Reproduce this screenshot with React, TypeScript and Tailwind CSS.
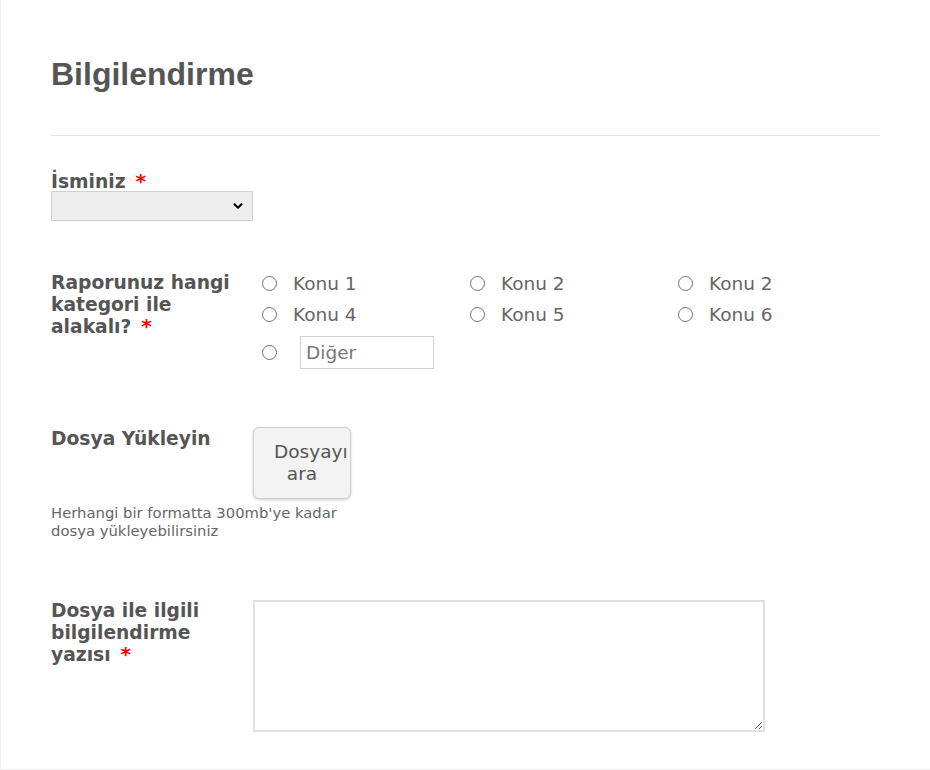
import { ChevronDown } from "lucide-react";

const dejavu = "font-['DejaVu_Sans',Verdana,sans-serif]";

function Label({ children, required }: { children: React.ReactNode; required?: boolean }) {
  return (
    <div className={`${dejavu} text-[18.7px] font-bold leading-[22px] text-[#555]`}>
      {children}
      {required && <span className="ml-[3px] text-[20px] leading-none text-[#f00]"> *</span>}
    </div>
  );
}

function Circle() {
  return <span className="h-[15px] w-[15px] shrink-0 rounded-full border-[1.5px] border-[#707070]" />;
}

function Radio({ label }: { label: string }) {
  return (
    <div className="flex h-[31px] items-center pl-[9px]">
      <Circle />
      <span className="ml-[16px] text-[18.5px] text-[#666]">{label}</span>
    </div>
  );
}

export default function App() {
  const options = ["Konu 1", "Konu 2", "Konu 2", "Konu 4", "Konu 5", "Konu 6"];
  return (
    <div className="h-[770px] w-[930px] border-b border-l border-[#f0f0f0] bg-white pl-[50px] pr-[50px]">
      <h1 className="pt-[55px] font-['Liberation_Sans',Arial,sans-serif] text-[32px] font-bold leading-[38px] text-[#555]">
        Bilgilendirme
      </h1>
      <div className="mt-[42px] h-px bg-[#e5e5e5]" />

      {/* İsim */}
      <div className="mt-[35px]">
        <div className="h-[20px] overflow-visible">
          <Label required>İsminiz</Label>
        </div>
        <div className="flex h-[30px] w-[202px] items-center justify-end border border-[#d0d0d0] bg-[#eee] pr-[7px]">
          <ChevronDown size={14} strokeWidth={3.5} className="text-black" />
        </div>
      </div>

      {/* Kategori */}
      <div className={`${dejavu} mt-[47px] flex`}>
        <div className="w-[202px] shrink-0 pt-[4px]">
          <Label required>
            Raporunuz hangi
            <br />
            kategori ile
            <br />
            alakalı?
          </Label>
        </div>
        <div>
          <div className="grid grid-cols-[208px_208px_208px]">
            {options.map((o, i) => (
              <Radio key={i} label={o} />
            ))}
          </div>
          <div className="mt-[6px] flex h-[33px] items-center pl-[9px]">
            <Circle />
            <input
              placeholder="Diğer"
              className="ml-[23px] h-[33px] w-[134px] border border-[#d0d0d0] bg-white pl-[5px] text-[18.5px] text-[#666] outline-none placeholder:text-[#777]"
            />
          </div>
        </div>
      </div>

      {/* Dosya */}
      <div className={`${dejavu} mt-[57px]`}>
        <div className="flex">
          <div className="w-[202px] shrink-0 pt-[2px]">
            <Label>Dosya Yükleyin</Label>
          </div>
          <button className="mt-[1px] w-[98px] rounded-[6px] border border-[#cfcfcf] bg-[#f3f3f3] px-[20px] py-[13px] text-center text-[18.5px] leading-[22px] text-[#555] shadow-[0_1px_3px_rgba(0,0,0,0.2)]">
            Dosyayı ara
          </button>
        </div>
        <p className="mt-[5px] text-[14.8px] leading-[18px] text-[#666]">
          Herhangi bir formatta 300mb'ye kadar
          <br />
          dosya yükleyebilirsiniz
        </p>
      </div>

      {/* Açıklama */}
      <div className={`${dejavu} mt-[60px] flex`}>
        <div className="w-[202px] shrink-0">
          <Label required>
            Dosya ile ilgili
            <br />
            bilgilendirme
            <br />
            yazısı
          </Label>
        </div>
        <textarea className="h-[132px] w-[512px] border-2 border-[#e0e0e0] bg-white outline-none" />
      </div>
    </div>
  );
}
